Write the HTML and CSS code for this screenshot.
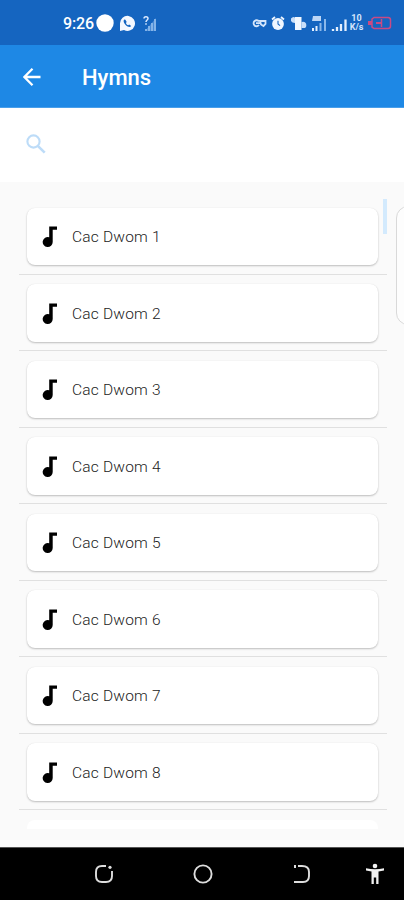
FILE: index.html
```
<!DOCTYPE html>
<html lang="en">
<head>
<meta charset="utf-8">
<title>Hymns</title>
<link rel="stylesheet" href="styles.css">
</head>
<body>
<svg width="0" height="0" class="defs"><symbol id="note" viewBox="0 0 16 22"><path d="M7.2 0.500H15v3.200h-4.300V16A5 5 0 1 1 7.200 11.300z"/></symbol></svg>
<div class="screen">
  <div class="status">
    <span class="time">9:26</span>
    <svg class="dot" width="18" height="18" viewBox="0 0 18 18"><circle cx="9" cy="9" r="8.700" fill="#fff"/></svg>
    <svg class="chat" width="17" height="17" viewBox="0 0 17 17"><path d="M1 16V8.500A7.500 7.500 0 1 1 5 15z" fill="#f4f8ff"/><path d="M5.300 4.500c-1.500 1.500-.2 4 1.600 5.700s4 2.500 5.300.8l-2-1.500-1 .8c-1-.4-1.900-1.200-2.300-2.300l.8-1-1.300-2.200z" fill="#1565c0"/></svg>
    <svg class="nosim" width="14" height="17" viewBox="0 0 14 17"><path d="M2 16 13 3v13z" fill="#4a8bd6"/><path d="M3 16v-2M6 16v-5M9 16V8M12 16V4" stroke="#8bb8ea" stroke-width="1.800"/><path d="M1 3.500C1 1 5 1 5 3.500 5 5 3 5 3 7M3 8.300v1.500" fill="none" stroke="#dceaff" stroke-width="1.500"/></svg>
    <span class="spacer"></span>
    <svg class="key" width="15" height="10" viewBox="0 0 15 10"><path d="M7 3.500a3 3 0 1 0 0 3.500M4 5.200h4M8 3h5.500v3L11.500 8 9 6.500z" fill="none" stroke="#d5e6fb" stroke-width="1.800"/></svg>
    <svg class="alarm" width="14" height="15" viewBox="0 0 14 15"><circle cx="7" cy="8" r="5.900" fill="#eff6ff"/><path d="M1 3.500 4 1M13 3.500 10 1" stroke="#eff6ff" stroke-width="1.800"/><path d="M7 4.800V8l2 1.700" fill="none" stroke="#1565c0" stroke-width="1.100"/></svg>
    <svg class="vibrate" width="17" height="15" viewBox="0 0 17 15"><path d="M4 1h6.500v13H4z" fill="#f1f7ff"/><path d="M0 2.500Q2 0 4 1.500V7Q1 7 0 5zM10.500 6Q14 5 15 7.500q1 3-1 4.500h-3.500z" fill="#c9dff9"/></svg>
    <svg class="hd" width="16" height="17" viewBox="0 0 16 17"><path d="M2 1h8v5H1z" fill="#bcd6f6"/><path d="M2 16v-3M5.500 16v-5" stroke="#e4effe" stroke-width="2"/><path d="M9.500 16V8M14 16V4" stroke="#8bb8ea" stroke-width="2"/></svg>
    <svg class="bars" width="17" height="14" viewBox="0 0 17 14"><path d="M2 13v-2M6 13V9M10 13V6M14.500 13V1.500" stroke="#e4effe" stroke-width="2.300"/></svg>
    <span class="speed"><span>10</span><span>K/s</span></span>
    <svg class="battery" width="24" height="14" viewBox="0 0 24 14"><path d="M6 1.500h14q2.500 0 2.500 2.500v6q0 2.500-2.500 2.500H6L4 11V3zM13.500 3v8" fill="none" stroke="#c94a84" stroke-width="1.500"/><path d="M0 5h4v4H0zM8 6h5v2H8z" fill="#c94a84"/></svg>
  </div>
  <div class="appbar">
    <svg width="18" height="18" viewBox="0 0 18 18"><path d="M17.500 9H1.500M9.500 .800 1.400 9 9.500 17.200" fill="none" stroke="#fff" stroke-width="2.300"/></svg>
    <h1>Hymns</h1>
  </div>
  <div class="search">
    <svg width="20" height="20" viewBox="0 0 20 20"><circle cx="7.500" cy="7.500" r="6.100" fill="none" stroke="#bddcf8" stroke-width="2.100"/><path d="M11.800 11.800 18.700 18.700" stroke="#bddcf8" stroke-width="2.600"/></svg>
  </div>
  <div class="content">
    <div class="list">
      <div class="row"><div class="card"><svg class="note"><use href="#note"/></svg><span>Cac Dwom 1</span></div></div>
      <div class="row"><div class="card"><svg class="note"><use href="#note"/></svg><span>Cac Dwom 2</span></div></div>
      <div class="row"><div class="card"><svg class="note"><use href="#note"/></svg><span>Cac Dwom 3</span></div></div>
      <div class="row"><div class="card"><svg class="note"><use href="#note"/></svg><span>Cac Dwom 4</span></div></div>
      <div class="row"><div class="card"><svg class="note"><use href="#note"/></svg><span>Cac Dwom 5</span></div></div>
      <div class="row"><div class="card"><svg class="note"><use href="#note"/></svg><span>Cac Dwom 6</span></div></div>
      <div class="row"><div class="card"><svg class="note"><use href="#note"/></svg><span>Cac Dwom 7</span></div></div>
      <div class="row"><div class="card"><svg class="note"><use href="#note"/></svg><span>Cac Dwom 8</span></div></div>
      <div class="row"><div class="card"></div></div>
    </div>
    <div class="scrollbar"></div>
    <div class="edge-panel"></div>
  </div>
  <div class="navbar">
    <svg width="20" height="20" viewBox="0 0 20 20"><path d="M12 2H8Q2 2 2 8v4q0 6 6 6h4q6 0 6-6V7" fill="none" stroke="#ddd" stroke-width="1.900"/><circle cx="16" cy="3.300" r="1.600" fill="#ddd"/></svg>
    <svg class="home" width="20" height="20" viewBox="0 0 20 20"><circle cx="10" cy="10" r="8.600" fill="none" stroke="#ddd" stroke-width="1.900"/></svg>
    <svg class="back" width="18" height="20" viewBox="0 0 18 20"><path d="M5 2h4q7 0 7 6v4q0 6-6 6H1" fill="none" stroke="#ddd" stroke-width="1.900"/><path d="M1 1h2v3H1z" fill="#ddd"/></svg>
    <svg class="access" width="20" height="22" viewBox="0 0 20 22"><circle cx="10" cy="3" r="2.300" fill="#f2f2f2"/><path d="M1 5.200q9 2 18 0v2.300l-5.500 1V21h-2.300v-6.500H8.800V21H6.500V8.500L1 7.500z" fill="#f2f2f2"/></svg>
  </div>
</div>
</body>
</html>
```
FILE: styles.css
```
* { box-sizing: border-box; }
body { margin: 0; font-family: Roboto, "Liberation Sans", sans-serif; }
svg { display: block; flex: none; }
.defs { position: absolute; }
.screen { width: 404px; height: 900px; display: flex; flex-direction: column; background: #fafafa; overflow: hidden; }
.status { flex: none; height: 45px; padding: 1px 12px 0 63px; display: flex; align-items: center; background: #1565c0; color: #fff; }
.time { width: 34px; font-size: 16px; font-weight: 500; letter-spacing: -0.1px; }
.dot { margin-left: -1px; }
.chat { margin-left: 5px; }
.nosim { margin-left: 7px; }
.spacer { flex: 1; }
.alarm { margin-left: 4px; }
.vibrate { margin-left: 6px; }
.hd { margin-left: 3px; }
.bars { margin: 3px 0 0 4px; }
.speed { display: flex; flex-direction: column; align-items: center; width: 15px; margin-left: 1px; font-size: 9px; line-height: 9px; font-weight: 700; color: #d5e6fb; }
.battery { margin-left: 4px; }
.appbar { flex: none; height: 63px; padding: 1px 0 0 23px; display: flex; align-items: center; gap: 41px; background: #1e88e5; color: #fff; border-bottom: 1px solid #4a9fea; }
h1 { margin: 3px 0 0; font-size: 22px; line-height: 28px; font-weight: 500; }
.search { flex: none; height: 74px; padding: 26px 0 0 26px; background: #fff; }
.content { position: relative; flex: 1; padding: 16px 17px 18px 19px; min-height: 0; }
.list { height: 100%; overflow: hidden; }
.row { height: 76.5px; padding: 9.5px 9px 0 8px; border-bottom: 1px solid #e0e0e0; }
.card { height: 57.5px; padding: 2px 0 0 15px; display: flex; align-items: center; gap: 14px; background: #fff; border-radius: 8px; box-shadow: 0 1px 2px rgba(0,0,0,.24), 0 0 1px rgba(0,0,0,.08); font-size: 15.5px; color: #222; letter-spacing: 0.2px; font-weight: 300; }
.row:last-child .card { box-shadow: none; }
.note { width: 16px; height: 22px; fill: #000; }
.scrollbar { position: absolute; top: 17px; right: 17px; width: 4px; height: 35px; background: #d3eafd; }
.edge-panel { position: absolute; top: 24px; right: -20px; width: 28px; height: 119px; background: #fdfdfd; border: 1px solid #d9d9d9; border-radius: 12px; }
.navbar { flex: none; height: 53px; padding: 0 18px 1px 94px; display: flex; align-items: center; background: #000; border-top: 1px solid #555; }
.home { margin-left: 79px; }
.back { margin-left: 80px; }
.access { margin-left: 54px; }
```
